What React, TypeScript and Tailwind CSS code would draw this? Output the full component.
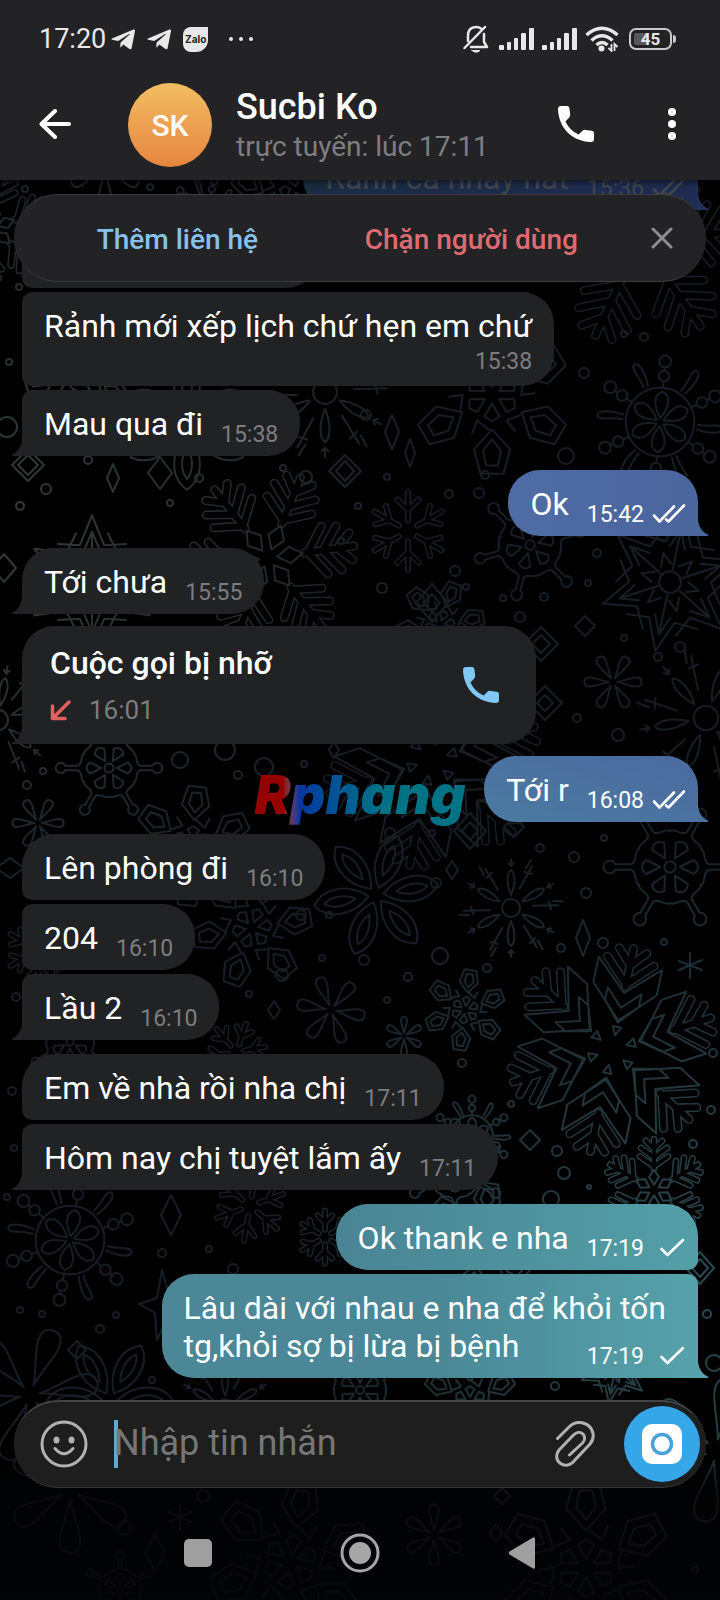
import { clsx } from "clsx"

type Message = {
  lines: string[]
  time: string
  out?: boolean
  // time on its own row below the text
  timeBelow?: boolean
  status?: "sent" | "read"
  shape: string
  gap: string
  tail?: boolean
  tone?: string
  tailTone?: string
}

const IN_SINGLE = "rounded-t-[32px] rounded-br-[32px]"
const IN_FIRST = "rounded-t-[32px] rounded-br-[32px] rounded-bl-[10px]"
const IN_MIDDLE = "rounded-l-[10px] rounded-r-[32px]"
const IN_LAST = "rounded-tl-[10px] rounded-r-[32px]"
const OUT_SINGLE = "rounded-t-[32px] rounded-bl-[32px]"
const OUT_FIRST = "rounded-t-[32px] rounded-bl-[32px] rounded-br-[10px]"
const OUT_LAST = "rounded-l-[32px] rounded-tr-[10px]"

const FIRST: Message = { lines: ["Rảnh cả nhảy hát"], time: "15:36", out: true, status: "read", shape: OUT_SINGLE, gap: "mt-0", tail: true, tone: "bg-gradient-to-r from-[#1a2c42] to-[#1f2b52] text-[#42474d]", tailTone: "text-[#23305a]" }

const BEFORE_CALL: Message[] = [
  { lines: ["Rảnh mới xếp lịch chứ hẹn em chứ"], time: "15:38", timeBelow: true, shape: IN_MIDDLE, gap: "mt-1" },
  { lines: ["Mau qua đi"], time: "15:38", shape: IN_LAST, gap: "mt-1", tail: true },
  { lines: ["Ok"], time: "15:42", out: true, status: "read", shape: OUT_SINGLE, gap: "mt-3.5", tail: true, tone: "bg-gradient-to-r from-[#4f6ca4] to-[#4b659d] text-white", tailTone: "text-[#4b659d]" },
  { lines: ["Tới chưa"], time: "15:55", shape: IN_SINGLE, gap: "mt-3", tail: true },
]

const AFTER_CALL: Message[] = [
  { lines: ["Tới r"], time: "16:08", out: true, status: "read", shape: OUT_SINGLE, gap: "mt-3", tail: true, tone: "bg-gradient-to-tr from-[#4b7aa0] to-[#4b6aa0] text-white", tailTone: "text-[#4b719f]" },
  { lines: ["Lên phòng đi"], time: "16:10", shape: IN_FIRST, gap: "mt-3" },
  { lines: ["204"], time: "16:10", shape: IN_MIDDLE, gap: "mt-1" },
  { lines: ["Lầu 2"], time: "16:10", shape: IN_LAST, gap: "mt-1", tail: true },
  { lines: ["Em về nhà rồi nha chị"], time: "17:11", shape: IN_FIRST, gap: "mt-3.5" },
  { lines: ["Hôm nay chị tuyệt lắm ấy"], time: "17:11", shape: IN_LAST, gap: "mt-1", tail: true },
  { lines: ["Ok thank e nha"], time: "17:19", out: true, status: "sent", shape: OUT_FIRST, gap: "mt-3.5", tone: "bg-gradient-to-r from-[#4a8494] to-[#539fa8] text-white" },
  { lines: ["Lâu dài với nhau e nha để khỏi tốn", "tg,khỏi sợ bị lừa bị bệnh"], time: "17:19", out: true, status: "sent", shape: OUT_LAST, gap: "mt-1", tail: true, tone: "bg-gradient-to-r from-[#4c8797] via-[#4a8796] to-[#56a2ab] text-white", tailTone: "text-[#56a2ab]" },
]

/* ---------- wallpaper ---------- */

type FlakeKind = "fern" | "crystal" | "petals" | "daisy" | "wheel" | "kites" | "knobs" | "star" | "burst" | "twig"

// [kind, x, y, radius, rotation], every flake is one arm turned six times
const FLAKES: [FlakeKind, number, number, number, number][] = [
  ["fern", -8, 228, 62, 10], ["petals", 105, 165, 40, 0], ["wheel", 205, 215, 38, 15],
  ["kites", 285, 205, 60, 0], ["kites", 80, 365, 60, 10], ["daisy", 187, 425, 66, 0],
  ["burst", 325, 392, 66, 0], ["star", 92, 582, 68, 0], ["fern", 268, 558, 92, 22],
  ["fern", 640, 240, 112, 25], ["wheel", 660, 422, 66, 5], ["kites", 492, 395, 82, 0],
  ["twig", 408, 531, 44, 0], ["knobs", 530, 545, 60, 15], ["star", 670, 582, 72, 12],
  ["petals", 613, 682, 30, 30], ["burst", 706, 718, 68, 20], ["crystal", 432, 760, 112, 12],
  ["knobs", 109, 768, 56, 30], ["burst", -2, 720, 56, 10], ["petals", 38, 823, 27, 30],
  ["kites", 192, 846, 62, 5], ["daisy", 376, 895, 64, 20], ["burst", 511, 908, 50, 0],
  ["knobs", 670, 867, 70, 30], ["kites", 252, 928, 62, 20], ["petals", 331, 1010, 36, 40],
  ["twig", 236, 1052, 34, 20], ["kites", 465, 1010, 42, 8], ["petals", 404, 1036, 20, 0],
  ["crystal", 612, 1050, 108, 12], ["twig", 38, 950, 36, 0], ["knobs", 70, 1042, 46, 0],
  ["wheel", 472, 1136, 40, 0], ["fern", 654, 1190, 54, 0], ["wheel", 70, 1240, 66, 10],
  ["twig", 250, 1206, 40, 10], ["twig", 325, 1237, 30, 0], ["petals", 30, 1395, 72, 20],
  ["daisy", 110, 1400, 64, 30], ["burst", 225, 1408, 48, 0], ["kites", 480, 1240, 60, 10],
  ["knobs", 360, 1390, 50, 0], ["kites", 470, 1402, 50, 0], ["star", 615, 1368, 36, 10],
  ["petals", 716, 1450, 76, 10], ["knobs", 455, 1170, 54, 0], ["petals", 70, 1490, 66, 0],
  ["kites", 290, 1562, 84, 10], ["petals", 434, 1535, 32, 0], ["kites", 586, 1568, 90, 0],
  ["knobs", 120, 1590, 40, 0], ["kites", 440, 625, 46, 20],
]

const CIRCLES: [number, number, number][] = [
  [25, 189, 3], [150, 187, 3], [19, 287, 3], [9, 362, 3], [7, 427, 10], [46, 489, 5], [88, 460, 4],
  [20, 506, 4], [199, 478, 4], [170, 503, 3], [306, 477, 6], [283, 468, 3], [358, 506, 3], [341, 541, 3],
  [366, 415, 5], [584, 373, 5], [624, 334, 3], [644, 337, 4], [566, 456, 8], [387, 477, 3], [485, 475, 4],
  [479, 493, 5], [449, 494, 4], [455, 571, 5], [382, 588, 5], [466, 587, 3], [544, 597, 4], [503, 598, 3],
  [588, 583, 3], [597, 553, 4], [520, 617, 5], [680, 647, 5], [624, 638, 3], [658, 657, 4], [577, 718, 4],
  [618, 735, 6], [180, 760, 8], [43, 771, 3], [27, 785, 4], [225, 750, 10], [264, 767, 9], [238, 775, 4],
  [304, 764, 3], [390, 833, 5], [432, 833, 3], [436, 883, 5], [540, 848, 4], [574, 857, 5], [586, 893, 5],
  [604, 838, 3], [282, 975, 6], [301, 915, 5], [329, 915, 3], [322, 958, 3], [249, 994, 3], [16, 997, 4],
  [12, 1091, 4], [440, 956, 8], [364, 960, 5], [408, 977, 4], [387, 1000, 3], [603, 943, 5], [561, 948, 4],
  [487, 968, 4], [664, 942, 3], [462, 1063, 4], [511, 1104, 3], [557, 1151, 5], [564, 1173, 6], [693, 1144, 4],
  [711, 1110, 4], [713, 1053, 4], [551, 1199, 8], [589, 1187, 2], [14, 1148, 3], [7, 1197, 3], [162, 1253, 4],
  [209, 1249, 3], [233, 1269, 5], [20, 1310, 3], [42, 1314, 3], [116, 1315, 3], [100, 1329, 4], [152, 1380, 3],
  [707, 1314, 4], [555, 1386, 4], [714, 1363, 8], [203, 1496, 6], [124, 1528, 7], [695, 1570, 3],
]

// [x, y, half width, half height]
const SPARKS: [number, number, number, number][] = [
  [113, 478, 6, 14], [160, 473, 12, 16], [28, 465, 16, 16], [28, 465, 10, 10], [345, 471, 16, 16], [345, 471, 9, 10],
  [392, 432, 7, 17], [410, 453, 5, 14], [432, 603, 16, 19], [432, 603, 8, 9], [585, 626, 10, 10], [541, 644, 17, 17],
  [541, 644, 9, 9], [545, 703, 17, 17], [545, 703, 8, 8], [334, 750, 5, 8], [470, 831, 16, 18], [470, 831, 8, 9],
  [514, 827, 10, 10], [452, 870, 6, 9], [274, 1010, 6, 9], [583, 938, 7, 18], [530, 1140, 10, 10], [171, 1215, 10, 20],
  [77, 1350, 9, 9], [700, 1268, 14, 16], [700, 1268, 8, 9], [502, 1496, 8, 8], [155, 1553, 10, 18], [496, 1533, 6, 9],
  [10, 868, 14, 10], [4, 568, 12, 14],
]

const FLAKE_ARMS: Record<FlakeKind, { solid?: string; outlined?: string; ring?: number }> = {
  fern: { outlined: "M0-40V-94M0-44L-26-62M0-44L26-62M0-60L-24-78M0-60L24-78M0-76L-15-91M0-76L15-91", solid: "M0-10L-9-24L0-38L9-24Z" },
  crystal: { outlined: "M0-60V-96M0-80L-13-94M0-80L13-94M0-62L-22-84M0-62L22-84", solid: "M0-54L-30-82V-58L0-28L30-58V-82ZM0-40L-16-56V-44L0-26L16-44V-56ZM0-14L-4-22H4Z" },
  petals: { solid: "M0-14C-4-40-20-70-14-86C-10-98 10-98 14-86C20-70 4-40 0-14Z" },
  daisy: { solid: "M0-12C-26-40-26-80 0-98C26-80 26-40 0-12ZM0-32C-10-50-10-70 0-82C10-70 10-50 0-32Z" },
  wheel: { solid: "M0-6C-12-24-14-40 0-46C14-40 12-24 0-6ZM0-52V-62M0-80V-84M-8-70A8 8 0 1 0 8-70A8 8 0 1 0-8-70M-9-92A9 9 0 1 0 9-92A9 9 0 1 0-9-92M28-50C40-66 40-82 48-82C58-80 48-60 34-46", ring: 52 },
  kites: { solid: "M0-42L-22-66L-14-96H14L22-66ZM0-54L-11-68L-7-86H7L11-68ZM0-10L-9-26L0-32L9-26ZM4-42L18-31L24-46" },
  knobs: { solid: "M-4-78A9 9 0 1 1 4-78M-4-78V-56C-6-46-24-52-26-44M4-78V-56C6-46 24-52 26-44M0-14L-10-34Q0-46 10-34Z", ring: 8 },
  star: { solid: "M0-98L-18-54L-50-56M0-98L18-54L50-56M0-18V-70M0-74L-11-48M0-74L11-48M8-24L24-34L20-16", ring: 15 },
  burst: { solid: "M0-26C-10-50-8-70 0-76C8-70 10-50 0-26ZM0-84V-98M18-40L42-84M27-72L42-68M30-80L40-96M-5-90L0-84L5-90", ring: 18 },
  twig: { outlined: "M0-24V-88M0-48L-24-72M0-48L24-72" },
}

function Flake({ kind, x, y, r, turn }: { kind: FlakeKind; x: number; y: number; r: number; turn: number }) {
  const arm = FLAKE_ARMS[kind]
  const angles = [0, 60, 120, 180, 240, 300]
  const fat = Math.min(9, Math.max(6, r / 8))

  return (
    <g transform={`translate(${x} ${y}) rotate(${turn}) scale(${r / 100})`}>
      {arm.outlined && (
        <>
          {angles.map((a) => (
            <path key={a} d={arm.outlined} transform={`rotate(${a})`} strokeWidth={fat} vectorEffect="non-scaling-stroke" />
          ))}
          {angles.map((a) => (
            <path key={a} d={arm.outlined} transform={`rotate(${a})`} stroke="black" strokeWidth={fat - 3} vectorEffect="non-scaling-stroke" />
          ))}
        </>
      )}
      {arm.solid &&
        angles.map((a) => (
          <path key={a} d={arm.solid} transform={`rotate(${a})`} vectorEffect="non-scaling-stroke" />
        ))}
      {arm.ring && <circle r={arm.ring} vectorEffect="non-scaling-stroke" />}
    </g>
  )
}

function Wallpaper() {
  return (
    <svg
      aria-hidden="true"
      viewBox="0 0 720 1600"
      preserveAspectRatio="xMidYMid slice"
      className="absolute inset-0 h-full w-full pointer-events-none"
    >
      <defs>
        <radialGradient id="glow-left" gradientUnits="userSpaceOnUse" cx="0" cy="520" r="420">
          <stop offset="0" stopColor="#323d3a" />
          <stop offset="1" stopColor="#323d3a" stopOpacity="0" />
        </radialGradient>
        <radialGradient id="glow-right" gradientUnits="userSpaceOnUse" cx="720" cy="1280" r="480">
          <stop offset="0" stopColor="#2c4950" />
          <stop offset="1" stopColor="#2c4950" stopOpacity="0" />
        </radialGradient>
        <linearGradient id="floor" x1="0" y1="0" x2="0" y2="1">
          <stop offset="0" stopColor="#020405" stopOpacity="0" />
          <stop offset="0.35" stopColor="#020405" stopOpacity="0.7" />
          <stop offset="1" stopColor="#020405" stopOpacity="0.85" />
        </linearGradient>
        <mask id="flakes" maskUnits="userSpaceOnUse" x="0" y="0" width="720" height="1600">
          <g fill="none" stroke="white" strokeWidth="2" strokeLinecap="round" strokeLinejoin="round">
            {FLAKES.map(([kind, x, y, r, turn]) => (
              <Flake key={`${x}-${y}`} kind={kind} x={x} y={y} r={r} turn={turn} />
            ))}
            {CIRCLES.map(([x, y, r]) => (
              <circle key={`${x}-${y}`} cx={x} cy={y} r={r} />
            ))}
            {SPARKS.map(([x, y, w, h]) => (
              <path key={`${x}-${y}-${w}`} d={`M${x} ${y - h}L${x + w} ${y}L${x} ${y + h}L${x - w} ${y}Z`} />
            ))}
            <path d="M162 1270L169 1295L190 1305L169 1315L157 1340L155 1313L139 1304L157 1298Z" />
            <path d="M690 953V978M679 961L702 970M702 960L679 970M180 1505V1530M169 1512L191 1522M191 1512L169 1522" />
          </g>
        </mask>
      </defs>
      <g mask="url(#flakes)">
        <rect width="720" height="1600" fill="#171d24" />
        <rect width="720" height="1600" fill="url(#glow-left)" />
        <rect width="720" height="1600" fill="url(#glow-right)" />
      </g>
      <rect y="1440" width="720" height="160" fill="url(#floor)" />
    </svg>
  )
}

/* ---------- icons ---------- */

function PlaneIcon() {
  return (
    <svg viewBox="0 0 24 21" className="h-[21px] w-6" fill="#e8e8e8">
      <path d="M1 9.6L22.4.5Q24.2 0 24 2L20.6 19.2Q20.2 21 18.4 20L12.4 15.6L9.9 18.2Q9.2 18.6 9.3 17.5L9.6 13.6L18.6 5.4Q18.8 4.8 18 5.1L7.2 12.1L1.2 10.8Q-.2 10.2 1 9.6Z" />
    </svg>
  )
}

function SignalIcon() {
  return (
    <svg viewBox="0 0 35 23" className="h-[23px] w-[35px]" fill="#e8e8e8">
      <rect x="0" y="17" width="5" height="5" rx="1" />
      <rect x="8" y="14" width="4" height="8" rx="1" />
      <rect x="15" y="10" width="4" height="12" rx="1" />
      <rect x="22" y="5" width="5" height="17" rx="1" />
      <rect x="30" y="0" width="5" height="22" rx="1" />
    </svg>
  )
}

function PhoneIcon() {
  return (
    <svg viewBox="0 0 36 36" className="h-9 w-9" fill="currentColor">
      <path d="M3 0H9Q11 0 11.4 2.2L12.2 8.4Q12.4 10.4 11 11.8L7.4 15.4Q11.6 24.2 20.6 28.6L24.2 25Q25.6 23.7 27.4 23.9L33.8 24.7Q36 25 36 27V33Q36 36 33 36C14 35.4 .6 22 0 3Q0 0 3 0Z" />
    </svg>
  )
}

function Checks({ status }: { status: "sent" | "read" }) {
  return (
    <svg
      viewBox="0 0 34 28"
      className="h-7 w-[34px]"
      fill="none"
      stroke="currentColor"
      strokeWidth="2.6"
      strokeLinecap="round"
      strokeLinejoin="round"
    >
      {status === "read" ? (
        <path d="M2 14.500L7.500 20.500L22 5.500M14 18.500L16.500 20.500L32 4.500" />
      ) : (
        <path d="M9.500 14L15.500 20L31 5" />
      )}
    </svg>
  )
}

function Tail({ out, className }: { out?: boolean; className?: string }) {
  return (
    <svg
      aria-hidden="true"
      viewBox="0 0 12 24"
      className={clsx("absolute bottom-0 h-6 w-3", out ? "-right-[11px] -scale-x-100" : "-left-[11px]", className)}
      fill="currentColor"
    >
      <path d="M12 0V24H1.500Q0 23.500 1 22.500C7 20 11 14 11 6V0Z" />
    </svg>
  )
}

/* ---------- chat ---------- */

function Bubble({ message }: { message: Message }) {
  const { lines, time, out, timeBelow, status, shape, gap, tail, tone, tailTone } = message
  const head = timeBelow ? lines : lines.slice(0, -1)
  const last = timeBelow ? null : lines[lines.length - 1]

  return (
    <li
      className={clsx(
        "relative w-fit max-w-[90%] pt-[15px] pb-[7px] pl-[22px] text-[32px] leading-[38px]",
        gap,
        shape,
        out ? "self-end pr-3" : "self-start bg-[#212224] pr-[22px] text-white",
        tone
      )}
    >
      {head.map((line) => (
        <p key={line} className={clsx(out && "pr-5")}>{line}</p>
      ))}
      <div className={clsx("flex gap-[18px]", last ? "items-end justify-between" : "h-[34px] items-center justify-end")}>
        {last && <p className="mb-1.5">{last}</p>}
        <span className={clsx("flex shrink-0 items-end gap-2 text-[23px] leading-7", !out && "text-[#7c7d7f]")}>
          <time>{time}</time>
          {status && <Checks status={status} />}
        </span>
      </div>
      {tail && <Tail out={out} className={out ? tailTone : "text-[#212224]"} />}
    </li>
  )
}

function MissedCall() {
  return (
    <li className="relative mt-3 flex w-[514px] max-w-[90%] items-center justify-between self-start rounded-t-[32px] rounded-br-[32px] bg-[#212224] py-[18px] pl-7 pr-[37px]">
      <div>
        <p className="text-[32px] font-medium leading-[38px] text-white">Cuộc gọi bị nhỡ</p>
        <p className="mt-3 flex items-center gap-[18px] text-[26px] leading-8 text-[#7c7d7f]">
          <svg viewBox="0 0 21 21" className="h-[21px] w-[21px]" fill="none" stroke="#e2605f" strokeWidth="3.500" strokeLinecap="round" strokeLinejoin="round">
            <path d="M19 2L2.500 18.500M2.500 6V18.500H15" />
          </svg>
          <time>16:01</time>
        </p>
      </div>
      <button aria-label="Gọi lại" className="text-[#80c7f4]">
        <PhoneIcon />
      </button>
      <Tail className="text-[#212224]" />
    </li>
  )
}

function StatusBar() {
  return (
    <div className="flex h-[78px] items-center justify-between pl-[39px] pr-11 text-[#e8e8e8]">
      <div className="flex items-center">
        <span className="text-[27px] leading-8">17:20</span>
        <div className="ml-[5px] flex items-center gap-3">
          <PlaneIcon />
          <PlaneIcon />
          <span className="flex h-[25px] w-[25px] items-center justify-center rounded-l-lg rounded-br-xl bg-[#e8e8e8] font-[Inter] text-[10px] font-bold text-[#232325]">
            Zalo
          </span>
        </div>
        <svg viewBox="0 0 24 4" className="ml-[21px] h-1 w-6" fill="#e8e8e8">
          <circle cx="2" cy="2" r="2" />
          <circle cx="12" cy="2" r="2" />
          <circle cx="22" cy="2" r="2" />
        </svg>
      </div>

      <div className="flex items-center">
        <svg viewBox="0 0 26 28" className="h-7 w-[26px]" fill="none" stroke="#e8e8e8" strokeWidth="2.500" strokeLinecap="round" strokeLinejoin="round">
          <path d="M1.500 23L22 2M5 16V11C5 5 8 2 13 2Q16 2 18 3.500M21 9V17L24 22H8" />
          <path d="M9 25.500H17Q13 29 9 25.500Z" fill="#e8e8e8" strokeWidth="1" />
        </svg>
        <div className="ml-2.5 flex gap-2">
          <SignalIcon />
          <SignalIcon />
        </div>
        <svg viewBox="0 0 34 26" className="ml-2 h-[26px] w-[34px]" fill="none" stroke="#e8e8e8" strokeWidth="3.500">
          <path d="M1.500 9Q17-4.500 32.500 9M6.500 14.500Q17 5 27.500 14.500M11.500 19Q17 14 22.500 19" />
          <circle cx="16.500" cy="22.500" r="3" fill="#e8e8e8" stroke="none" />
          <path d="M26.500 18V25L23.500 22M29.500 25V18L32.500 21" strokeWidth="1.800" />
        </svg>
        <div className="ml-2.5 flex items-center gap-px">
          <div className="flex h-[22px] w-[43px] items-center justify-center rounded-[7px] border-2 border-[#c9c9c9] bg-gradient-to-r from-[#58585a] from-45% to-transparent to-45% bg-clip-content p-[3px] text-[17px] font-bold leading-4">
            45
          </div>
          <span className="h-2 w-[3px] rounded-r bg-[#c9c9c9]" />
        </div>
      </div>
    </div>
  )
}

function ChatHeader() {
  return (
    <div className="flex h-[102px] items-start pl-[39px] pr-11">
      <button aria-label="Quay lại" className="mt-[30px]">
        <svg viewBox="0 0 32 32" className="h-8 w-8" fill="none" stroke="white" strokeWidth="4" strokeLinecap="round" strokeLinejoin="round">
          <path d="M16 3L2.500 16L16 29M3 16H30" />
        </svg>
      </button>
      <div className="ml-[57px] mt-[5px] flex h-[84px] w-[84px] shrink-0 items-center justify-center rounded-full bg-gradient-to-b from-[#f2bd63] to-[#e5853f] text-[30px] font-medium text-white">
        SK
      </div>
      <div className="ml-6 mt-2 flex-1">
        <h1 className="text-[36px] font-medium leading-[42px] text-white">Sucbi Ko</h1>
        <p className="text-[28px] leading-[38px] text-[#7e7e80]">trực tuyến: lúc 17:11</p>
      </div>
      <button aria-label="Gọi" className="mt-7 text-white">
        <PhoneIcon />
      </button>
      <button aria-label="Thêm" className="ml-[74px] mt-[29px]">
        <svg viewBox="0 0 8 34" className="h-[34px] w-2" fill="white">
          <circle cx="4" cy="5" r="4" />
          <circle cx="4" cy="17" r="4" />
          <circle cx="4" cy="29" r="4" />
        </svg>
      </button>
    </div>
  )
}

function ContactBanner() {
  return (
    <div className="absolute inset-x-3.5 top-3.5 flex h-[88px] items-center rounded-full border-y border-[#3c3c3e] bg-[#232325] text-[28px] font-medium leading-8">
      <button className="flex-[5] pt-1 text-[#86c2ea]">Thêm liên hệ</button>
      <button className="flex-[4] pt-1 text-[#de6b71]">Chặn người dùng</button>
      <button aria-label="Đóng" className="flex w-[104px] justify-center pl-4">
        <svg viewBox="0 0 22 22" className="h-[22px] w-[22px]" fill="none" stroke="#8d8d8e" strokeWidth="3" strokeLinecap="round">
          <path d="M2 2L20 20M20 2L2 20" />
        </svg>
      </button>
    </div>
  )
}

function Composer() {
  return (
    <form className="relative mx-3.5 flex h-[88px] items-center rounded-full border-b border-t-2 border-b-[#353535] border-t-[#434343] bg-[#1e1e1e] pb-0.5 pl-[26px] pr-1.5">
      <button type="button" aria-label="Biểu tượng cảm xúc">
        <svg viewBox="0 0 48 48" className="h-12 w-12" fill="none" stroke="#b2b2b2" strokeWidth="3" strokeLinecap="round">
          <circle cx="24" cy="24" r="22" />
          <path d="M15 28.500Q24 39 33 28.500" />
          <ellipse cx="16.500" cy="20" rx="3" ry="3.500" fill="#b2b2b2" stroke="none" />
          <ellipse cx="31.500" cy="20" rx="3" ry="3.500" fill="#b2b2b2" stroke="none" />
        </svg>
      </button>
      <span className="ml-[26px] h-12 w-1 shrink-0 bg-[#5fa9d6]" />
      <input
        aria-label="Nhập tin nhắn"
        placeholder="Nhập tin nhắn"
        className="-ml-1 min-w-0 flex-1 bg-transparent pb-0.5 text-[36px] leading-[44px] text-white outline-none placeholder:text-[#767676]"
      />
      <button type="button" aria-label="Đính kèm">
        <svg viewBox="0 0 40 46" className="h-[46px] w-10" fill="none" stroke="#b2b2b2" strokeWidth="3" strokeLinecap="round" strokeLinejoin="round">
          <path d="M2.500 17.500L14 6C18 2 24 .5 29.500 2.500C38 5.500 41 16 35 23L19.500 39.500C16 44.500 10 45.500 5.500 42.500C1 39.500 .5 33.500 4 29L18.500 14C21.500 11 25.500 10.500 28 13C30.500 15.500 30 19.500 27.500 22L14.500 34" />
        </svg>
      </button>
      <button type="button" aria-label="Quay video" className="ml-[29px] flex h-[76px] w-[76px] shrink-0 items-center justify-center rounded-full bg-[#35a6e7]">
        <svg viewBox="0 0 40 40" className="h-10 w-10">
          <rect width="40" height="40" rx="10" fill="white" />
          <circle cx="20" cy="20" r="9.500" fill="white" stroke="#47a3d8" strokeWidth="3.500" />
        </svg>
      </button>
    </form>
  )
}

function NavBar() {
  return (
    <nav className="relative flex h-[112px] items-start justify-center pt-[45px]">
      <button aria-label="Gần đây" className="flex h-10 w-[162px] items-center justify-center">
        <span className="h-7 w-7 rounded-[5px] bg-[#9f9f9f]" />
      </button>
      <button aria-label="Trang chủ" className="flex h-10 w-[162px] items-center justify-center">
        <svg viewBox="0 0 40 40" className="h-10 w-10">
          <circle cx="20" cy="20" r="18" fill="none" stroke="#a6a6a6" strokeWidth="3" />
          <circle cx="20" cy="20" r="11" fill="#a6a6a6" />
        </svg>
      </button>
      <button aria-label="Trở về" className="flex h-10 w-[162px] items-center justify-center">
        <svg viewBox="0 0 28 34" className="h-[34px] w-7" fill="#9f9f9f">
          <path d="M1.500 15.500L25 1.500Q27 .5 27 3V31Q27 33.500 25 32.500L1.500 18.500Q0 17 1.500 15.500Z" />
        </svg>
      </button>
    </nav>
  )
}

export default function App() {
  return (
    <div className="relative flex h-screen flex-col overflow-hidden bg-black font-[Roboto,'Noto_Sans',sans-serif]">
      <Wallpaper />

      <header className="relative z-10 bg-[#232325] shadow-[0_2px_6px_rgba(0,0,0,0.6)]">
        <StatusBar />
        <ChatHeader />
      </header>

      <main className="relative flex min-h-0 flex-1 flex-col">
        <div className="flex min-h-0 flex-1 flex-col-reverse overflow-y-auto [scrollbar-width:none]">
          <ul className="flex flex-col px-[22px] pb-[22px]">
            <Bubble message={FIRST} />
            {/* sits behind the banner */}
            <li aria-hidden="true" className={clsx("mt-3 h-[66px] w-[296px] self-start bg-[#212224]", IN_FIRST)} />
            {BEFORE_CALL.map((message) => (
              <Bubble key={message.lines[0]} message={message} />
            ))}
            <MissedCall />
            {AFTER_CALL.map((message) => (
              <Bubble key={message.lines[0]} message={message} />
            ))}
          </ul>
        </div>
        <ContactBanner />
      </main>

      <Composer />
      <NavBar />

      {/* watermark */}
      <div className="pointer-events-none absolute inset-0 flex items-center justify-center pb-2.5">
        <span className="bg-gradient-to-r from-[#960000] from-15% via-[#0a35a0] via-22% to-[#007286] to-60% bg-clip-text px-1 font-[Inter] text-[54px] font-black italic leading-[64px] text-transparent">
          Rphang
        </span>
      </div>
    </div>
  )
}
